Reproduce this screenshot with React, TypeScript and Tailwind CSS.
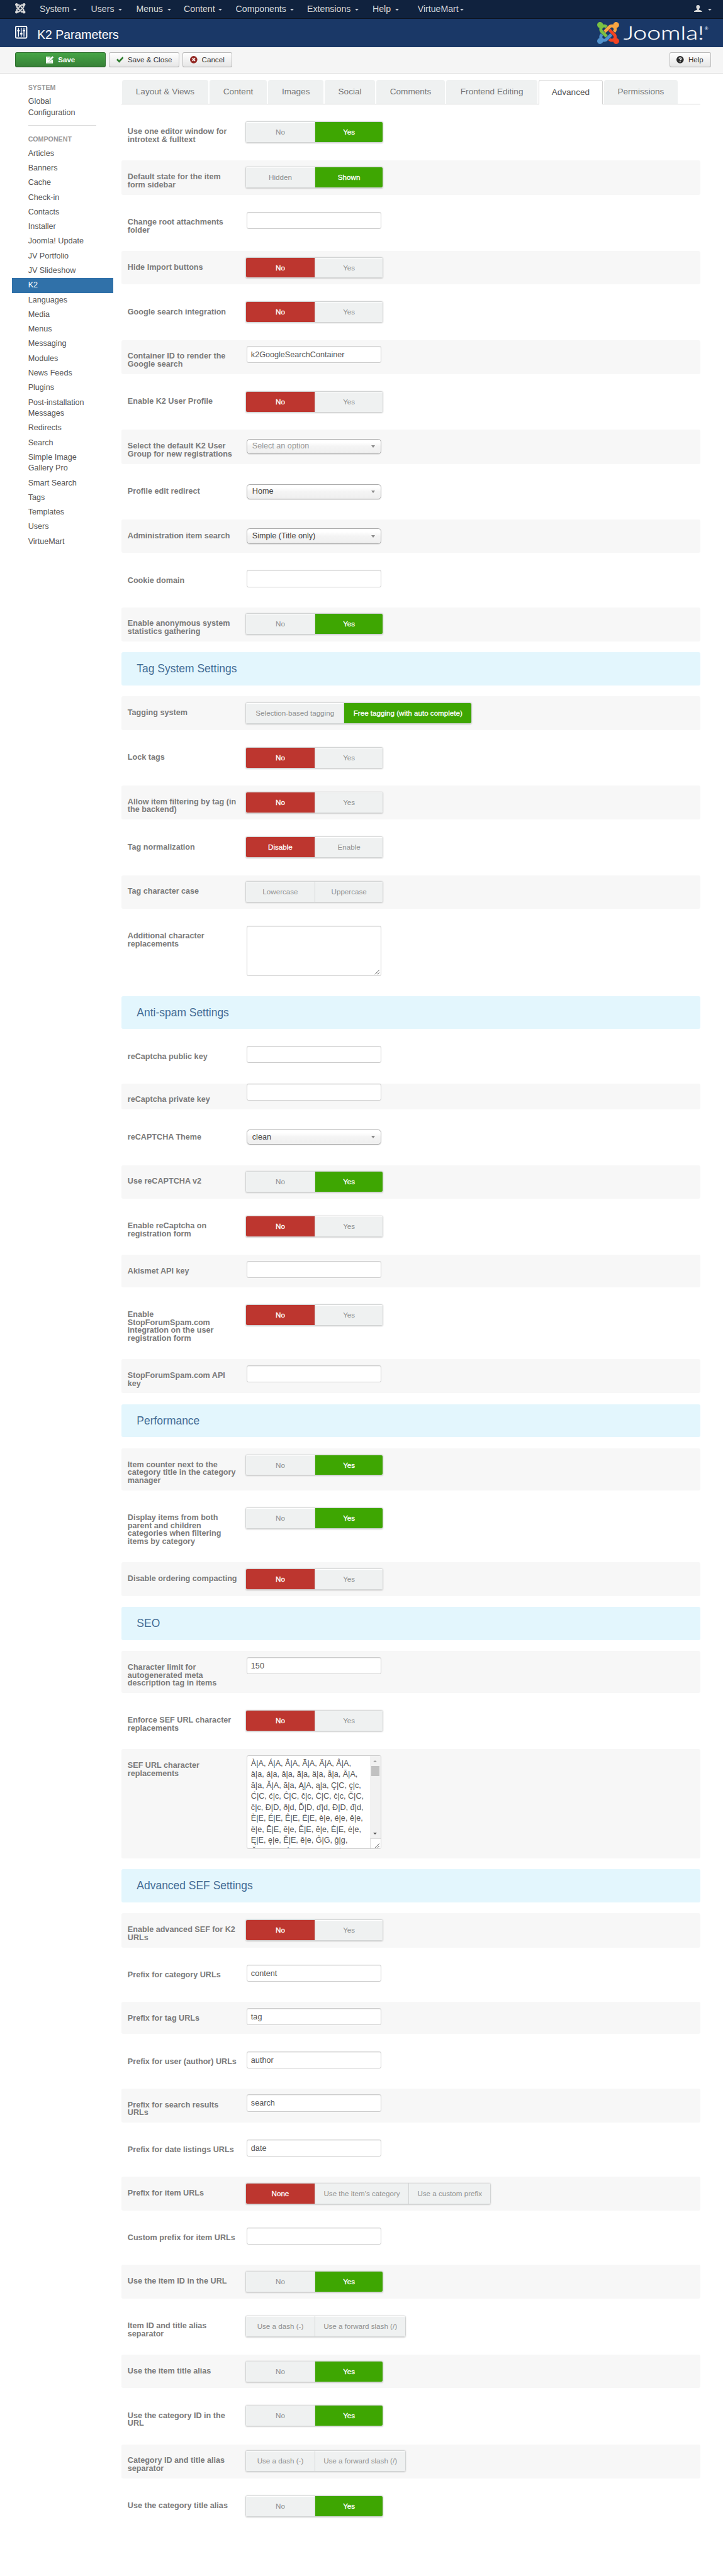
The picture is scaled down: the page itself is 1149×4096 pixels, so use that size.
import React from "react";

type Control =
  | { kind: "toggle"; options: string[]; widths?: string[]; active?: number; tone?: "red" | "green" }
  | { kind: "input"; value?: string; flush?: boolean }
  | { kind: "select"; value: string; muted?: boolean }
  | { kind: "textarea" }
  | { kind: "charmap" };

type Row = { label: string; shaded?: boolean; height: string; control: Control };
type Section = { title?: string; rows: Row[] };

const no: Control = { kind: "toggle", options: ["No", "Yes"], active: 0, tone: "red" };
const yes: Control = { kind: "toggle", options: ["No", "Yes"], active: 1, tone: "green" };
const separator: Control = {
  kind: "toggle",
  options: ["Use a dash (-)", "Use a forward slash (/)"],
  widths: ["w-[112px]", "w-[149px]"],
};
const input = (value = ""): Control => ({ kind: "input", value });

const H1 = "h-[55px]";
const H2 = "h-[56px]";
const H3 = "h-[69px]";
const H4 = "h-[82px]";
const HI = "h-[53px]";

const sections: Section[] = [
  {
    rows: [
      { label: "Use one editor window for\nintrotext & fulltext", height: H2, control: yes },
      {
        label: "Default state for the item\nform sidebar",
        shaded: true,
        height: H2,
        control: { kind: "toggle", options: ["Hidden", "Shown"], active: 1, tone: "green" },
      },
      { label: "Change root attachments\nfolder", height: H2, control: input() },
      { label: "Hide Import buttons", shaded: true, height: H1, control: no },
      { label: "Google search integration", height: H1, control: no },
      { label: "Container ID to render the\nGoogle search", shaded: true, height: H2, control: input("k2GoogleSearchContainer") },
      { label: "Enable K2 User Profile", height: H1, control: no },
      {
        label: "Select the default K2 User\nGroup for new registrations",
        shaded: true,
        height: H2,
        control: { kind: "select", value: "Select an option", muted: true },
      },
      { label: "Profile edit redirect", height: H1, control: { kind: "select", value: "Home" } },
      { label: "Administration item search", shaded: true, height: H1, control: { kind: "select", value: "Simple (Title only)" } },
      { label: "Cookie domain", height: HI, control: input() },
      { label: "Enable anonymous system\nstatistics gathering", shaded: true, height: H2, control: yes },
    ],
  },
  {
    title: "Tag System Settings",
    rows: [
      {
        label: "Tagging system",
        shaded: true,
        height: H1,
        control: {
          kind: "toggle",
          options: ["Selection-based tagging", "Free tagging (with auto complete)"],
          widths: ["w-[160px]", "w-[209px]"],
          active: 1,
          tone: "green",
        },
      },
      { label: "Lock tags", height: H1, control: no },
      { label: "Allow item filtering by tag (in\nthe backend)", shaded: true, height: H2, control: no },
      {
        label: "Tag normalization",
        height: H1,
        control: { kind: "toggle", options: ["Disable", "Enable"], active: 0, tone: "red" },
      },
      {
        label: "Tag character case",
        shaded: true,
        height: H1,
        control: { kind: "toggle", options: ["Lowercase", "Uppercase"] },
      },
      { label: "Additional character\nreplacements", height: "h-[107px]", control: { kind: "textarea" } },
    ],
  },
  {
    title: "Anti-spam Settings",
    rows: [
      { label: "reCaptcha public key", height: HI, control: input() },
      { label: "reCaptcha private key", shaded: true, height: "h-[43px]", control: { kind: "input", flush: true } },
      { label: "reCAPTCHA Theme", height: H1, control: { kind: "select", value: "clean" } },
      { label: "Use reCAPTCHA v2", shaded: true, height: H1, control: yes },
      { label: "Enable reCaptcha on\nregistration form", height: H2, control: no },
      { label: "Akismet API key", shaded: true, height: HI, control: input() },
      { label: "Enable\nStopForumSpam.com\nintegration on the user\nregistration form", height: H4, control: no },
      { label: "StopForumSpam.com API\nkey", shaded: true, height: H2, control: input() },
    ],
  },
  {
    title: "Performance",
    rows: [
      { label: "Item counter next to the\ncategory title in the category\nmanager", shaded: true, height: H3, control: yes },
      {
        label: "Display items from both\nparent and children\ncategories when filtering\nitems by category",
        height: H4,
        control: yes,
      },
      { label: "Disable ordering compacting", shaded: true, height: H1, control: no },
    ],
  },
  {
    title: "SEO",
    rows: [
      { label: "Character limit for\nautogenerated meta\ndescription tag in items", shaded: true, height: H3, control: input("150") },
      { label: "Enforce SEF URL character\nreplacements", height: H2, control: no },
      { label: "SEF URL character\nreplacements", shaded: true, height: "h-[179px]", control: { kind: "charmap" } },
    ],
  },
  {
    title: "Advanced SEF Settings",
    rows: [
      { label: "Enable advanced SEF for K2\nURLs", shaded: true, height: H2, control: no },
      { label: "Prefix for category URLs", height: HI, control: input("content") },
      { label: "Prefix for tag URLs", shaded: true, height: HI, control: input("tag") },
      { label: "Prefix for user (author) URLs", height: HI, control: input("author") },
      { label: "Prefix for search results\nURLs", shaded: true, height: H2, control: input("search") },
      { label: "Prefix for date listings URLs", height: HI, control: input("date") },
      {
        label: "Prefix for item URLs",
        shaded: true,
        height: H1,
        control: {
          kind: "toggle",
          options: ["None", "Use the item's category", "Use a custom prefix"],
          widths: ["w-[112px]", "w-[154px]", "w-[134px]"],
          active: 0,
          tone: "red",
        },
      },
      { label: "Custom prefix for item URLs", height: HI, control: input() },
      { label: "Use the item ID in the URL", shaded: true, height: H1, control: yes },
      { label: "Item ID and title alias\nseparator", height: H2, control: separator },
      { label: "Use the item title alias", shaded: true, height: H1, control: yes },
      { label: "Use the category ID in the\nURL", height: H2, control: yes },
      { label: "Category ID and title alias\nseparator", shaded: true, height: H2, control: separator },
      { label: "Use the category title alias", height: H1, control: yes },
    ],
  },
];

const charLines = [
  "À|A, Á|A, Â|A, Ã|A, Ä|A, Å|A,",
  "à|a, á|a, â|a, ã|a, ä|a, å|a, Ā|A,",
  "ā|a, Ă|A, ă|a, Ą|A, ą|a, Ç|C, ç|c,",
  "Ć|C, ć|c, Ĉ|C, ĉ|c, Ċ|C, ċ|c, Č|C,",
  "č|c, Ð|D, ð|d, Ď|D, ď|d, Đ|D, đ|d,",
  "È|E, É|E, Ê|E, Ë|E, è|e, é|e, ê|e,",
  "ë|e, Ē|E, ē|e, Ĕ|E, ĕ|e, Ė|E, ė|e,",
  "Ę|E, ę|e, Ě|E, ě|e, Ĝ|G, ĝ|g,",
  "Ğ|G, ğ|g, Ġ|G, ġ|g, Ģ|G, ģ|g,",
];

const menus = [
  { name: "System", box: "w-[84px]", gap: "gap-[6px]" },
  { name: "Users", box: "w-[74px]", gap: "gap-[7px]" },
  { name: "Menus", box: "w-[78px]", gap: "gap-[7px]" },
  { name: "Content", box: "w-[85px]", gap: "gap-[6px]" },
  { name: "Components", box: "w-[117px]", gap: "gap-[6px]" },
  { name: "Extensions", box: "w-[107px]", gap: "gap-[7px]" },
  { name: "Help", box: "w-[74px]", gap: "gap-[7px]" },
  { name: "VirtueMart", box: "w-[90px]", gap: "gap-[2px]" },
];

const tabs = [
  { name: "Layout & Views", width: "w-[141px]" },
  { name: "Content", width: "w-[94px]" },
  { name: "Images", width: "w-[91px]" },
  { name: "Social", width: "w-[82px]" },
  { name: "Comments", width: "w-[113px]" },
  { name: "Frontend Editing", width: "w-[149px]" },
  { name: "Advanced", width: "w-[105px]" },
  { name: "Permissions", width: "w-[121px]" },
];

const components = [
  "Articles", "Banners", "Cache", "Check-in", "Contacts", "Installer", "Joomla! Update", "JV Portfolio",
  "JV Slideshow", "K2", "Languages", "Media", "Menus", "Messaging", "Modules", "News Feeds", "Plugins",
  "Post-installation\nMessages", "Redirects", "Search", "Simple Image\nGallery Pro", "Smart Search", "Tags",
  "Templates", "Users", "VirtueMart",
];

function JoomlaMark({ colors, className }: { colors: string[]; className: string }) {
  return (
    <svg viewBox="0 32 448 448" preserveAspectRatio="none" className={className}>
      <path fill={colors[0]} d="M.6 92.1C.6 58.8 27.4 32 60.4 32c30 0 54.5 21.9 59.2 50.2 32.6-7.6 67.1.6 96.5 30l-44.3 44.3c-20.5-20.5-42.6-16.3-55.4-3.5-14.3 14.3-14.3 37.9 0 52.2l99.5 99.5-44 44.3c-87.7-87.2-49.7-49.7-99.8-99.7-26.8-26.5-35-64.8-24.8-98.9C20.4 144.6.6 120.7.6 92.1z" />
      <path fill={colors[1]} d="M130.1 208.5l44.3 44.3c10-10 89.7-89.7 99.7-99.8 14.3-14.3 37.6-14.3 51.9 0 12.8 12.8 17 35-3.5 55.4l44 44.3c31.2-31.2 38.5-67.6 28.9-101.2 29.2-4.1 51.9-29.2 51.9-59.5 0-33.2-26.8-60.1-59.8-60.1-30.3 0-55.4 22.5-59.5 51.6-33.8-9.9-71.7-1.5-98.3 25.1-18.3 19.1-71.1 71.5-99.6 99.9z" />
      <path fill={colors[2]} d="M396.4 360.7c8.2-32.7-.9-68.5-26.3-93.9-11.8-12.2 5 4.7-99.5-99.7l-44.3 44.3 99.7 99.7c14.3 14.3 14.3 37.6 0 51.9-12.8 12.8-35 17-55.4-3.5l-44 44.3c27.6 30.2 68 38.8 102.7 28 5.5 27.4 29.7 48.1 58.9 48.1 33 0 59.8-26.8 59.8-60.1 0-30.2-22.5-55-51.6-59.1z" />
      <path fill={colors[3]} d="M312.1 307.6l-44-44.3c-87 86.4-50.4 50.4-99.7 99.8-14.3 14.3-37.6 14.3-51.9 0-13.1-13.4-16.9-35.3 3.2-55.4l-44-44.3c-30.2 30.2-38 65.2-29.5 98.3-26.7 6-46.2 29.9-46.2 58.2C0 453.2 26.8 480 59.8 480c28.6 0 52.5-19.8 58.6-46.7 32.7 8.2 68.5-.6 94.2-26 32.1-32 12.2-12.4 99.5-99.7z" />
    </svg>
  );
}

function Caret() {
  return <span className="mt-[2px] size-0 border-x-4 border-t-4 border-x-transparent border-t-[#cfd3d9]" />;
}

function Navbar() {
  return (
    <nav className="flex h-[31px] items-center border-b border-[#0d1420] bg-[#10223e] pr-[19px] pl-[25px] text-[14.6px] leading-[30px] text-[#d9d9d9]">
      <JoomlaMark colors={["#d9d9d9", "#d9d9d9", "#d9d9d9", "#d9d9d9"]} className="mt-[-2px] mr-[23px] size-[17px]" />
      {menus.map((m) => (
        <span key={m.name} className={`flex shrink-0 items-center ${m.box} ${m.gap}`}>
          {m.name}
          <Caret />
        </span>
      ))}
      <svg viewBox="0 0 13 12" className="mt-[-2px] mr-[9px] ml-auto h-3 w-[13px] fill-[#d9d9d9]">
        <path d="M6.5 0c2 0 3 1.200 3 3.200 0 1.600-.7 2.800-1.500 3.600v1c1.500.7 4.600 1.200 5 2.800V12H0v-1.400c.4-1.600 3.500-2.100 5-2.800v-1C4.200 6 3.500 4.800 3.500 3.200 3.500 1.200 4.500 0 6.500 0z" />
      </svg>
      <Caret />
    </nav>
  );
}

function TitleBar() {
  return (
    <header className="flex h-[46px] items-center bg-[#1a3867] pl-[25px] text-white">
      <svg viewBox="0 0 20 21" className="mt-[6px] mr-4 mb-[8px] h-[21px] w-5" fill="none" stroke="#fff">
        <rect x="1" y="1" width="18" height="19" rx="1.500" strokeWidth="2" />
        <path d="M5.500 3v15M10 3v15M14.500 3v15" strokeWidth="1.400" />
        <path d="M3.500 8h4M8 13h4M12.500 8h4" strokeWidth="2.200" />
      </svg>
      <h1 className="mt-[6px] text-[20px] leading-[30px]">K2 Parameters</h1>
      <div className="mr-[23px] ml-auto flex items-center">
        <JoomlaMark colors={["#7ac143", "#f9a541", "#f44321", "#5091cd"]} className="h-9 w-9" />
        <svg viewBox="0 0 142 36" className="ml-[5px] h-9 w-[142px] fill-white">
          <text x="2" y="28.500" fontSize="29.500" fontFamily="Lato" fontWeight="300" stroke="#fff" strokeWidth=".3" textLength="132" lengthAdjust="spacingAndGlyphs">
            Joomla!
          </text>
          <text x="135" y="13" fontSize="7.500" fontFamily="Liberation Sans">®</text>
        </svg>
      </div>
    </header>
  );
}

const plainButton =
  "flex h-6 items-center justify-center rounded-[3px] border border-[#bbb] border-b-[#a2a2a2] bg-linear-to-b from-white to-[#e6e6e6] text-[#333]";

function Toolbar() {
  return (
    <div className="flex h-11 items-start border-b border-[#ddd] bg-[#f5f5f5] pt-[9px] pr-5 pl-[25px] text-[12px]">
      <button className="mr-[5px] flex h-6 w-[148px] items-center justify-center rounded-[3px] border border-[#2d6f2d] border-b-[#1f4f1f] bg-linear-to-b from-[#46a546] to-[#378137] font-bold text-white">
        <svg viewBox="0 0 13 12" className="mr-[7px] h-3 w-[13px]">
          <path fill="#fff" d="M0 1h8L6.500 2.500H2v8h8V7l1.500-1.500V12H0z" />
          <path fill="#fff" d="M2 2.500h8v8H2z" />
          <path stroke="#3f943f" strokeWidth="3.600" d="M5 8l6.500-6.500" />
          <path fill="#fff" d="M3.500 9.500l.6-2.600L10.600.3l2 2-6.500 6.500z" />
        </svg>
        Save
      </button>
      <button className={`mr-[5px] w-[116px] ${plainButton}`}>
        <svg viewBox="0 0 12 10" className="mr-[7px] h-[10px] w-3 fill-[#2f7d2f]">
          <path d="M0 5.300L2 3.300l2.500 2.500L10 .2l2 2L4.500 10z" />
        </svg>
        Save &amp; Close
      </button>
      <button className={`w-[81px] ${plainButton}`}>
        <svg viewBox="0 0 12 12" className="mr-[7px] size-3">
          <circle cx="6" cy="6" r="6" fill="#942a25" />
          <path d="M3.800 3.800l4.400 4.400M8.200 3.800L3.800 8.200" stroke="#fff" strokeWidth="1.800" />
        </svg>
        Cancel
      </button>
      <button className={`ml-auto w-[68px] ${plainButton}`}>
        <svg viewBox="0 0 12 12" className="mr-[7px] size-3">
          <circle cx="6" cy="6" r="6" fill="#2b2b2b" />
          <path d="M4.200 4.700C4.200 2.500 8 2.600 8 4.600 8 5.900 6 5.900 6 7.300" fill="none" stroke="#fff" strokeWidth="1.500" />
          <circle cx="6" cy="9.200" r=".9" fill="#fff" />
        </svg>
        Help
      </button>
    </div>
  );
}

function Sidebar() {
  return (
    <aside className="w-[165px] shrink-0 pt-[14px] text-[13px] leading-[18px] text-[#555]">
      <h2 className="px-[26px] text-[11px] font-bold text-[#999]">SYSTEM</h2>
      <p className="mt-[2px] px-[26px] py-[3px] whitespace-pre-line">{"Global\nConfiguration"}</p>
      <hr className="mt-2 ml-[26px] w-28 border-[#ddd]" />
      <h2 className="mt-[13px] px-[26px] text-[11px] font-bold text-[#999]">COMPONENT</h2>
      <ul className="mt-[3px]">
        {components.map((c) => (
          <li
            key={c}
            className={`px-[26px] py-[3px] whitespace-pre-line ${c === "K2" ? "bg-[#3071a9] text-white" : ""}`}
          >
            {c}
          </li>
        ))}
      </ul>
    </aside>
  );
}

function Tabs() {
  return (
    <div className="flex h-10 gap-[2px] border-b border-[#d3d3d3] pl-px text-[14px] text-[#777]">
      {tabs.map((t) => (
        <div
          key={t.name}
          className={`flex h-10 shrink-0 items-center justify-center rounded-t-[4px] ${t.width} ${
            t.name === "Advanced"
              ? "border border-b-0 border-[#d3d3d3] bg-white text-[#555]"
              : "border-b border-[#d3d3d3] bg-[#eff1f1]"
          }`}
        >
          {t.name}
        </div>
      ))}
    </div>
  );
}

function Grip({ className = "" }: { className?: string }) {
  return (
    <svg viewBox="0 0 9 9" className={`size-[9px] ${className}`} stroke="#555" strokeWidth="1">
      <path d="M1 8.500L8 1.500M5 8.500L8 5.500" />
    </svg>
  );
}

function Field({ control }: { control: Control }) {
  switch (control.kind) {
    case "toggle":
      return (
        <div className="mt-[10px] ml-[203px] flex h-[35px] w-max overflow-hidden rounded-[3px] border border-[#d2d4d4] text-[12px] leading-[32px] shadow-[0_1px_2px_rgba(0,0,0,0.18)]">
          {control.options.map((o, i) => {
            const on = control.active === i;
            const look = on
              ? control.tone === "green"
                ? "bg-[#3ea602] text-white [-webkit-text-stroke:0.3px_white]"
                : "bg-[#bd362f] text-white [-webkit-text-stroke:0.3px_white]"
              : "bg-[#eff1f1] text-[#8e9090] shadow-[inset_0_1px_0_#fff]";
            return (
              <span
                key={o}
                className={`text-center whitespace-nowrap ${control.widths ? control.widths[i] : "w-[112px]"} ${
                  i > 0 ? "border-l border-[#d2d4d4]" : ""
                } ${look}`}
              >
                {o}
              </span>
            );
          })}
        </div>
      );
    case "input":
      return (
        <div
          className={`ml-[205px] h-7 w-[220px] rounded-[3px] border border-[#ccc] bg-white px-[6px] text-[13px] leading-[27px] text-[#555] shadow-[inset_0_1px_1px_rgba(0,0,0,0.075)] ${
            control.flush ? "" : "mt-[10px]"
          }`}
        >
          {control.value}
        </div>
      );
    case "select":
      return (
        <div
          className={`mt-[15px] ml-[205px] flex h-[25px] w-[220px] items-center justify-between rounded-[5px] border border-[#aaa] bg-linear-to-b from-white from-20% via-[#f4f4f4] via-50% to-[#efefef] pr-[9px] pl-2 text-[13px] shadow-[0_1px_1px_rgba(0,0,0,0.1)] ${
            control.muted ? "text-[#999]" : "text-[#444]"
          }`}
        >
          {control.value}
          <span className="size-0 border-x-[3.5px] border-t-[5px] border-x-transparent border-t-[#888]" />
        </div>
      );
    case "textarea":
      return (
        <div className="mt-[10px] ml-[205px] flex h-[82px] w-[220px] items-end justify-end rounded-[3px] border border-[#ccc] bg-white p-px shadow-[inset_0_1px_1px_rgba(0,0,0,0.075)]">
          <Grip />
        </div>
      );
    case "charmap":
      return (
        <div className="mt-[10px] ml-[205px] flex h-[154px] w-[220px] overflow-hidden rounded-[3px] border border-[#ccc] bg-white">
          <div className="w-[201px] shrink-0 overflow-hidden pt-1 pl-[6px] text-[13px] leading-[18px] whitespace-nowrap text-[#555]">
            {charLines.map((l) => (
              <div key={l}>{l}</div>
            ))}
          </div>
          <div className="flex w-[17px] flex-col items-center bg-[#f1f1f1]">
            <span className="mt-[7px] size-0 border-x-4 border-b-4 border-x-transparent border-b-[#a3a3a3]" />
            <span className="mt-[6px] h-[17px] w-[13px] bg-[#c1c1c1]" />
            <span className="mt-auto mb-[6px] size-0 border-x-4 border-t-4 border-x-transparent border-t-[#505050]" />
            <span className="flex h-[17px] w-full items-end justify-end border-t border-l border-[#dcdcdc] bg-white p-px">
              <Grip />
            </span>
          </div>
        </div>
      );
  }
}

function SettingRow({ row }: { row: Row }) {
  return (
    <div className={`mb-[18px] flex items-start rounded-[3px] ${row.height} ${row.shaded ? "bg-[#f7f7f7]" : ""}`}>
      <label className="mr-[-200px] w-[200px] shrink-0 pt-[20.5px] pl-[10px] text-[13px] leading-[13px] font-bold whitespace-pre text-[#7b7b7b]">
        {row.label}
      </label>
      <Field control={row.control} />
    </div>
  );
}

export default function App() {
  return (
    <div className="h-[4220px] w-[1184px] overflow-hidden bg-white [zoom:0.9705] font-['Liberation_Sans',Arial,sans-serif]">
      <Navbar />
      <TitleBar />
      <Toolbar />
      <div className="flex pl-5">
        <Sidebar />
        <main className="ml-[14px] w-[948px] pt-[10px]">
          <Tabs />
          <div className="pt-[18px]">
            {sections.map((s, i) => (
              <section key={i}>
                {s.title && (
                  <h2 className="mb-[18px] h-[54px] rounded-[3px] bg-[#e3f6fd] pl-[25px] text-[18px] leading-[54px] text-[#436c95]">
                    {s.title}
                  </h2>
                )}
                {s.rows.map((r) => (
                  <SettingRow key={r.label} row={r} />
                ))}
              </section>
            ))}
          </div>
        </main>
      </div>
    </div>
  );
}
